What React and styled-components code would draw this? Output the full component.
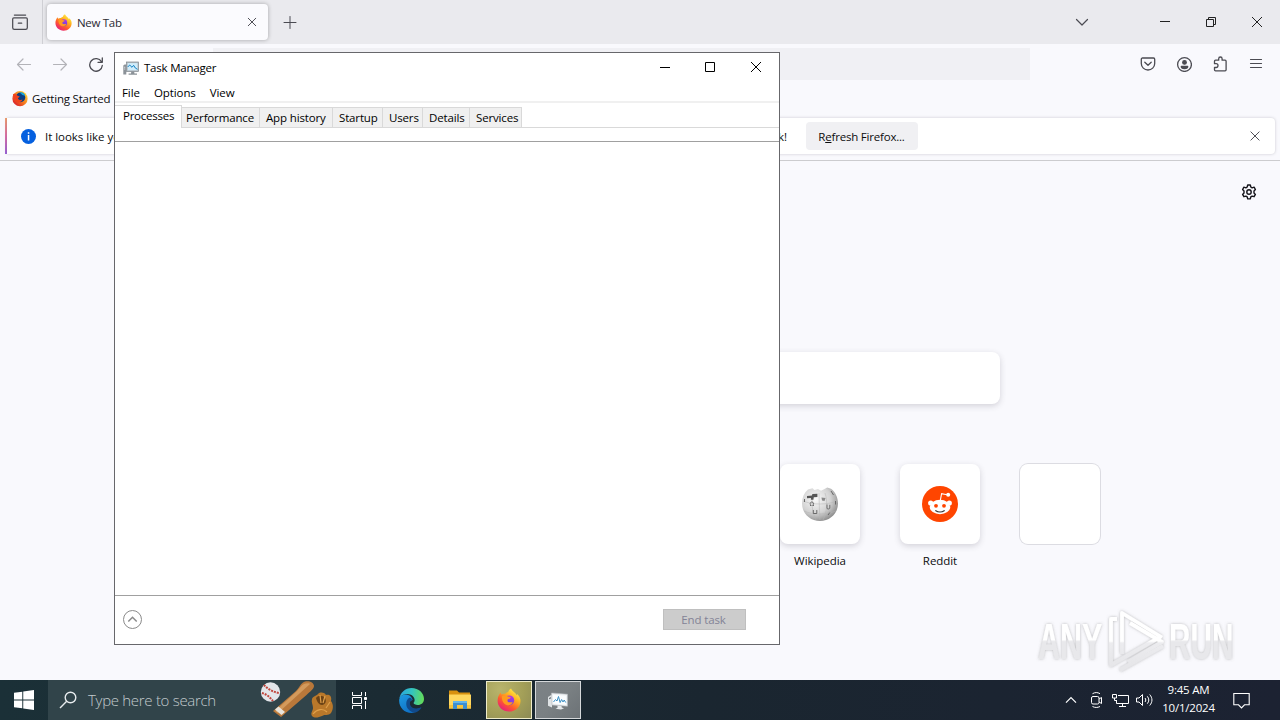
import React from 'react';
import styled, { createGlobalStyle, css } from 'styled-components';

const GlobalStyle = createGlobalStyle`
  * { box-sizing: border-box; }
  body {
    margin: 0;
    overflow: hidden;
    font-family: 'Open Sans', 'Noto Sans', sans-serif;
    font-size: 11.5px;
    letter-spacing: -0.2px;
    color: #0c0c0d;
  }
  svg { display: block; flex: none; }
`;

/* ---------- icons ---------- */

const LineIcon = ({ size = 16, width = 1.2, children }) => (
    <svg width={size} height={size} viewBox="0 0 16 16" fill="none" stroke="currentColor"
        strokeWidth={width} strokeLinecap="round" strokeLinejoin="round">
        {children}
    </svg>
);

const FirefoxLogo = ({ size, id }) => (
    <svg width={size} height={size} viewBox="0 0 24 24">
        <defs>
            <linearGradient id={`${id}-body`} x1="0.85" y1="0.05" x2="0.2" y2="1">
                <stop offset="0" stopColor="#fff44f" />
                <stop offset="0.35" stopColor="#ffb01f" />
                <stop offset="0.65" stopColor="#ff5a2d" />
                <stop offset="1" stopColor="#e31587" />
            </linearGradient>
            <linearGradient id={`${id}-core`} x1="0.6" y1="0" x2="0.3" y2="1">
                <stop offset="0" stopColor="#b833e1" />
                <stop offset="1" stopColor="#5b4bd8" />
            </linearGradient>
        </defs>
        <path fill={`url(#${id}-body)`} d="M14 0.5c1 2.4 3 3.5 4.3 4.8.8.8 1 1.5 1.2 2 .4-.3.5-.8.5-1.200C22.400 8 23.500 10.400 23.500 13c0 6-5 10.600-11.400 10.600S.6 18.800.6 12.800c0-3.600 1.400-6.300 3.200-8.200.1.900.3 1.400.7 2C5.700 5.800 7 5.600 8.200 5.800c1.100-1.200 2-1.700 2.900-1.900C11.500 2.500 12.500 1.300 14 .5z" />
        <circle cx="12.300" cy="12.300" r="4.900" fill={`url(#${id}-core)`} />
        <path fill="#ff9a1f" d="M5 8.300c1.800-1.500 4.300-1.400 5.800.2 1.300.2 2.300.5 3 .9-.5 1.200-2 1.300-2.800 1.900-1 .8-.6 2.500.7 2.900 1.500.5 2.900-.4 4.100.1-1 2.300-3.200 3.400-5.500 2.900C6.800 16.400 4.500 12.500 5 8.300z" />
    </svg>
);

const OldFirefoxLogo = () => (
    <svg width="16" height="16" viewBox="0 0 16 16">
        <defs>
            <linearGradient id="old-fox" x1="0.9" y1="0.1" x2="0.1" y2="0.9">
                <stop offset="0" stopColor="#ffd83a" />
                <stop offset="0.5" stopColor="#f57b1f" />
                <stop offset="1" stopColor="#d9182b" />
            </linearGradient>
        </defs>
        <circle cx="8" cy="7.700" r="7.600" fill="url(#old-fox)" />
        <circle cx="8.500" cy="6.400" r="4.800" fill="#0a3f82" />
        <path fill="#18a6d8" d="M8 1.300c2.600-.4 4.800 1.400 5.300 3.600-1.500-.9-2.800-.4-3.700-1.600-.6-.8-1.600-.9-1.600-2z" />
        <path fill="#f0421e" d="M1 3.200c1.600-.4 3.600.1 4.600 1.600l2.200.6-1.900 1.900c.4 2 3 2 4.600 1.300-1 3.100-4.500 3.700-6.900 1.400C2 8.400.8 5.900 1 3.200z" />
    </svg>
);

const TaskManagerIcon = ({ size = 16 }) => (
    <svg width={size} height={size} viewBox="0 0 16 16">
        <path fill="#8b9298" d="M0.300 5.500l1.300-.9h1.700v9.900H.300z" />
        <path fill="#d4d8da" d="M1 6.800h1.300v1H1zM1 8.600h1.300v1H1z" />
        <rect x="3.600" y="2" width="12" height="9.400" fill="#b5bdc3" stroke="#7d868c" strokeWidth=".7" />
        <rect x="4.700" y="3.100" width="9.800" height="7.200" fill="#cfecfa" />
        <path d="M4.700 7l2-2L9 7.300l1.600-2 1.800 2.800 2.100 1.200" fill="none" stroke="#1583c4" strokeWidth="1" />
        <path fill="#8b9298" d="M8.300 11.400h2.800l.4 2H14v1.300H5.600v-1.300H8z" />
    </svg>
);

const TaskbarMonitorIcon = () => (
    <svg width="22" height="20" viewBox="0 0 22 20">
        <path fill="#dfe3e5" d="M1 7l4-2.500v13L1 15.800z" />
        <path fill="#73797d" d="M2 8l2-1v1.500l-2 .8z" />
        <path fill="#eef1f3" stroke="#b4b9bd" strokeWidth=".6" d="M4.500 3L20.500 4.200v12L5 15z" />
        <path fill="#fafdff" d="M6 4.700l13 1v9L6.200 13.600z" />
        <path d="M6.500 12l2-2.500L10 11l1.500-4.500 1.600 6 1.500-3L16 12l1.200-2 1.500 2.500" fill="none" stroke="#3b8fc4" strokeWidth="1" />
        <path fill="#e5e8ea" d="M10.500 15.600l4 .4.300 1.500 2.200.8-3 1.200-5.500-.8 2-1z" />
    </svg>
);

const WikipediaLogo = () => (
    <svg width="38" height="38" viewBox="0 0 38 38">
        <defs>
            <radialGradient id="globe" cx="0.38" cy="0.35" r="0.7">
                <stop offset="0" stopColor="#fafafa" />
                <stop offset="0.6" stopColor="#d2d2d2" />
                <stop offset="1" stopColor="#8a8a8a" />
            </radialGradient>
        </defs>
        <path fill="url(#globe)" d="M7 4.500l4.500-1.200 2 1.700 3.500-.9 3 1.600 3-1.500 3.200-1.700 3.800 1.200C34.500 7 37 12.500 37 18.500 37 28.500 29 36 19 36S1 28.500 1 18.500C1 12.500 3 8 7 4.500z" />
        <path fill="none" stroke="#b4b4b4" strokeWidth=".5" d="M12 9c-2 8-1 18 3 26M24 8c3 9 2 19-2 27M2 16c10 4 24 4 34 0M3 26c9 4 23 4 32 0M18 8c0 9 .5 18 1 27" />
        <path fill="#555" d="M6 11l5-.4.4-1.600 5-.2v3.200l-3.600.3-.4 2.500h-2.500V13l-3.900.3z" />
        <path fill="#8a8a8a" d="M20.500 12.500l4 .5-1 3-2.500-.6z" />
        <path fill="none" stroke="#606060" strokeWidth=".9" d="M9 20.500h1.200c-1.800-1.500-1-3.500.7-3.500s2.300 2 .8 3.500H13M26 19.500v4c1 .8 2.500.5 2.800-.3v-3.400M12.300 25v3.500h3.500V25M27 30l1.800-2.500M30 6l2.500 4M3.500 14v3M34.500 16v3.500" />
    </svg>
);

const RedditLogo = () => (
    <svg width="36" height="36" viewBox="0 0 36 36">
        <circle cx="18" cy="18" r="18" fill="#ff4500" />
        <path d="M18.300 14.500l1.300-6.900 5.500 1.200" fill="none" stroke="#fff" strokeWidth="1.100" />
        <circle cx="26.200" cy="8.800" r="2" fill="#fff" />
        <circle cx="8.700" cy="17" r="2.600" fill="#fff" />
        <circle cx="27.300" cy="17" r="2.600" fill="#fff" />
        <ellipse cx="18" cy="21" rx="10.300" ry="7.200" fill="#fff" />
        <circle cx="14" cy="19.800" r="1.900" fill="#ff4500" />
        <circle cx="22" cy="19.800" r="1.900" fill="#ff4500" />
        <path d="M13.800 24.700c2.300 1.500 6.100 1.500 8.400 0" fill="none" stroke="#333" strokeWidth="1.200" strokeLinecap="round" />
    </svg>
);

const EdgeLogo = () => (
    <svg width="25" height="25" viewBox="0 0 24 24">
        <defs>
            <linearGradient id="edge-top" x1="0" y1="0.3" x2="1" y2="0.4">
                <stop offset="0" stopColor="#2aa6e0" />
                <stop offset="0.5" stopColor="#33c3c0" />
                <stop offset="1" stopColor="#63dc5a" />
            </linearGradient>
            <linearGradient id="edge-side" x1="0" y1="0" x2="0.6" y2="1">
                <stop offset="0" stopColor="#1e9be2" />
                <stop offset="1" stopColor="#0f6ec4" />
            </linearGradient>
        </defs>
        <path fill="url(#edge-side)" d="M.2 11C1 7 5 5.500 8 6.500c3 .8 5 3 5 5-2 .500-3.300 2-3 4 .5 3.500 5 6 10.500 3.800C18.500 22.200 15.500 24 12 24 5 24-.5 18 .2 11z" />
        <path fill="#114a8b" d="M9.500 9.500C6.500 11.500 6 17 9 20.500c2 2.300 5 3.400 7 3 2-.6 4-2.300 5.300-4.200.3-.5 0-.9-.6-.6-4.500 2-9.500.500-10.200-3.200-.3-1.700.4-3.500 2-4.500-.5-1.300-1.800-2-3-1.500z" />
        <path fill="url(#edge-top)" d="M.2 11C1 4.500 6 0 12 0c7 0 12 5 12 10.500 0 3.500-2.600 5.800-6 5.800-2.400 0-4-.8-4-1.800 0-.8 1-1 1-3 0-3-3-5.700-7-5.700-4 0-7 2-7.800 5.200z" />
    </svg>
);

const ExplorerLogo = () => (
    <svg width="24" height="22" viewBox="0 0 24 22">
        <path fill="#d8910f" d="M1 1.500h8l2 2h11v4H1z" />
        <path fill="#ffd75e" d="M1 5.500h22v14H1z" />
        <path fill="#f7c43c" d="M1 16h22v3.500H1z" />
        <path fill="#3d8fd1" d="M5 12h14v8h-4v-4H9v4H5z" />
        <path fill="#64b5ea" d="M5 12h14v2H5z" />
    </svg>
);

const BaseballArt = () => (
    <svg width="76" height="40" viewBox="0 0 76 40">
        <circle cx="10.500" cy="12" r="9.700" fill="#e3e6ea" />
        <path d="M4 5c3.500 4 9 7 15 8M2 13c4 1 8 4 11 8" fill="none" stroke="#c0453b" strokeWidth="2" strokeDasharray="2 1" />
        <path fill="#b9783a" d="M43 2.500c4-3 11-.5 11 3.500 0 3-4 5.500-7.500 9L21 37l-8-6L36 11c3-3 4-6.500 7-8.500z" />
        <path fill="#d39a5c" d="M44 4c3-1.500 6-.5 6 0L18 33l-3-2L37 11c3-3 4-5.500 7-7z" />
        <path fill="#e8e4dc" d="M18.500 26.500l6.500 5.500-3.500 3L15 29.500z" />
        <path fill="#b9782a" d="M52 19c1-3 4-3 6-5 2-2 6-2 8 1 4-1 6 2 5 6 3 4 2 9 0 12-3 3-6 1-9 3-3 1-7 3-10 0-2-3 1-5 1-8s-2-6-1-9z" />
        <path fill="#6b4215" d="M56 18c2-3 7-3 9 0 2 3 0 7-3 7s-5-3-6-7z" />
        <path fill="none" stroke="#e0a04a" strokeWidth="1.200" d="M53 34c4-5 10-6 14-2M60 15l1 8M65 16l-2 7M70 22l-4 6" />
    </svg>
);

const Watermark = () => (
    <svg width="212" height="76" viewBox="0 0 212 76">
        <defs>
            <linearGradient id="mark" gradientUnits="userSpaceOnUse" x1="0" y1="18" x2="0" y2="64">
                <stop offset="0" stopColor="#ffffff" />
                <stop offset="0.460" stopColor="#ffffff" />
                <stop offset="0.500" stopColor="#ececef" />
                <stop offset="1" stopColor="#e6e6e9" />
            </linearGradient>
            <linearGradient id="mark-text" gradientUnits="userSpaceOnUse" x1="0" y1="-36" x2="0" y2="0">
                <stop offset="0.460" stopColor="#ffffff" />
                <stop offset="0.520" stopColor="#e8e8eb" />
            </linearGradient>
            <filter id="mark-shadow" x="-10%" y="-10%" width="120%" height="120%">
                <feDropShadow dx="0" dy="0" stdDeviation="1.700" floodColor="#777" floodOpacity=".5" />
            </filter>
        </defs>
        <g filter="url(#mark-shadow)">
            <g fill="url(#mark-text)" fontFamily="'Liberation Sans', sans-serif" fontWeight="700" fontSize="50" letterSpacing="0">
                <text transform="translate(7 57) scale(0.610 1)">ANY</text>
                <text transform="translate(138 57) scale(0.595 1)">RUN</text>
            </g>
            <path fill="none" stroke="url(#mark)" strokeWidth="3.800" strokeLinejoin="round" d="M91 52V11l40 24.500M97 60l34-20-32-19" />
            <path fill="none" stroke="url(#mark)" strokeWidth="3.800" strokeLinejoin="round" d="M86 17h-6v46l49-28M89 68l43-24" />
        </g>
    </svg>
);

/* ---------- shell ---------- */

const Desktop = styled.div`
  position: relative;
  width: 1280px;
  height: 720px;
  display: flex;
  flex-direction: column;
  overflow: hidden;
`;

const Browser = styled.div`
  height: 680px;
  display: flex;
  flex-direction: column;
  background: #f9f9fd;
`;

const Slot = styled.div`
  width: ${p => p.$w}px;
  height: ${p => p.$h || 32}px;
  flex: none;
  display: flex;
  align-items: center;
  justify-content: center;
  color: ${p => p.$color || '#4b4b52'};
`;

const Spacer = styled.div`
  flex: 1;
`;

const TabStrip = styled.div`
  height: 44px;
  display: flex;
  align-items: center;
  background: #eaeaee;
`;

const ArchiveSlot = styled(Slot)`
  padding-right: 2px;
  border-right: 1px solid #cfcfd4;
`;

const BrowserTab = styled.div`
  width: 221px;
  height: 36px;
  margin-left: 4px;
  padding: 0 9px 0 8px;
  display: flex;
  align-items: center;
  gap: 5px;
  background: #fbfbfe;
  border-radius: 4px;
  box-shadow: 0 0 4px rgba(0, 0, 0, 0.3);
  color: #2b2a33;
`;

const TabLabel = styled.span`
  letter-spacing: -0.3px;
`;

const NavBar = styled.div`
  height: 40px;
  padding: 0 6px;
  display: flex;
  align-items: center;
`;

const UrlField = styled.div`
  width: 817px;
  height: 32px;
  margin-left: 99px;
  background: #f0f0f4;
`;

const Bookmarks = styled.div`
  height: 31px;
  padding: 0 12px 2px;
  display: flex;
  align-items: center;
  gap: 4px;
`;

const Notice = styled.div`
  height: 46px;
  padding: 3px 5px 6px;
  border-bottom: 1px solid #cccccf;
  display: flex;
`;

const NoticeAccent = styled.div`
  width: 2px;
  background: linear-gradient(#f0a070, #dc6fa8 50%, #9a62d8);
`;

const NoticeCard = styled.div`
  flex: 1;
  display: flex;
  align-items: center;
  padding-left: 14px;
  background: #fff;
  border-radius: 0 4px 4px 0;
  box-shadow: 0 0 3px rgba(58, 57, 68, 0.25);
`;

const NoticeText = styled.div`
  width: 742px;
  margin-left: 9px;
  display: flex;
  justify-content: space-between;
  letter-spacing: -0.03px;
  white-space: nowrap;
`;

const RefreshButton = styled.button`
  width: 112px;
  height: 28px;
  margin-left: 19px;
  padding: 0 1px 0 0;
  border: 0;
  border-radius: 4px;
  background: #f0f0f3;
  font: inherit;
  letter-spacing: -0.2px;
  color: #0c0c0d;
`;

const NewTabPage = styled.div`
  flex: 1;
  display: flex;
  flex-direction: column;
`;

const GearRow = styled.div`
  height: 191px;
  padding: 15px 15px 0;
  display: flex;
  justify-content: flex-end;
`;

const SearchBox = styled.div`
  width: 720px;
  height: 52px;
  margin: 0 auto 60px;
  border-radius: 8px;
  background: #fff;
  box-shadow: 0 2px 6px rgba(58, 57, 68, 0.2);
`;

const TopSites = styled.div`
  height: 108px;
  padding-right: 180px;
  display: flex;
  justify-content: flex-end;
  gap: 40px;
`;

const Site = styled.div`
  width: 80px;
  display: flex;
  flex-direction: column;
  align-items: center;
  gap: 8px;
  line-height: 17px;
  letter-spacing: -0.05px;
`;

const SiteTile = styled.div`
  width: 80px;
  height: 80px;
  display: flex;
  align-items: center;
  justify-content: center;
  background: #fff;
  border-radius: 8px;
  box-shadow: ${p => (p.$empty ? '0 0 0 1px #dcdce2' : '0 2px 6px rgba(58, 57, 68, 0.2)')};
`;

const WatermarkRow = styled.div`
  height: 76px;
  margin-top: 30px;
  padding-right: 37px;
  display: flex;
  justify-content: flex-end;
`;

/* ---------- task manager window ---------- */

const Window = styled.div`
  position: absolute;
  left: 114px;
  top: 52px;
  width: 666px;
  height: 593px;
  display: flex;
  flex-direction: column;
  background: #fff;
  border: 1px solid #67676b;
  color: #000;
`;

const TitleBar = styled.div`
  height: 30px;
  padding: 0 0 1px 8px;
  display: flex;
  align-items: center;
`;

const Title = styled.span`
  flex: 1;
  margin-left: 5px;
  letter-spacing: -0.22px;
`;

const WindowButton = styled(Slot)`
  height: 28px;
  padding-bottom: 1px;
`;

const MenuBar = styled.div`
  height: 20px;
  padding-left: 7px;
  display: flex;
  align-items: center;
  gap: 14px;
  border-bottom: 2px solid #f0f0f0;
  letter-spacing: -0.08px;
`;

const TabRow = styled.div`
  height: 25px;
  display: flex;
  align-items: flex-end;
  border-bottom: 1px solid #d9d9d9;
`;

const Tab = styled.div`
  width: ${p => p.$w}px;
  height: 20px;
  padding-left: ${p => p.$pad}px;
  border: 1px solid #d9d9d9;
  border-width: 1px 1px 0 0;
  background: #f0f0f0;
  line-height: 20px;
  letter-spacing: -0.15px;
  white-space: nowrap;
  ${p => p.$active && css`
    height: 23px;
    margin-bottom: -1px;
    background: #fff;
    line-height: 19px;
    letter-spacing: -0.25px;
  `}
`;

const ListHeader = styled.div`
  height: 14px;
  border-bottom: 1px solid #a0a0a0;
`;

const Footer = styled.div`
  height: 49px;
  padding: 0 33px 1px 8px;
  display: flex;
  align-items: center;
  justify-content: space-between;
  border-top: 1px solid #a0a0a0;
`;

const EndTask = styled.button`
  width: 83px;
  height: 21px;
  padding: 0 2px 0 0;
  border: 1px solid #bfbfbf;
  background: #cccccc;
  color: #838396;
  font: inherit;
  line-height: 18px;
  letter-spacing: -0.15px;
`;

/* ---------- taskbar ---------- */

const Taskbar = styled.div`
  height: 40px;
  display: flex;
  align-items: center;
  background: linear-gradient(90deg, #1b3037 0, #1b2b33 30%, #1a2630 55%, #1c2232 100%);
  color: #fff;
`;

const TaskSearch = styled.div`
  width: 288px;
  height: 40px;
  padding-left: 11px;
  display: flex;
  align-items: center;
  background: #31444a;
  color: #c3cbcd;
  font-size: 15px;
  letter-spacing: -0.3px;
`;

const SearchHint = styled.span`
  width: 173px;
  margin-left: 11px;
  font-weight: 300;
  white-space: nowrap;
`;

const AppTile = styled.div`
  width: 46px;
  height: 38px;
  margin-right: 3px;
  display: flex;
  align-items: center;
  justify-content: center;
  border: 1px solid ${p => p.$edge};
  background: ${p => p.$fill};
`;

const Clock = styled.div`
  width: 64px;
  padding: 0 3px 2px 0;
  text-align: center;
  line-height: 18px;
  letter-spacing: -0.2px;
`;

const TABS = [
    { label: 'Processes', w: 67, pad: 8, active: true },
    { label: 'Performance', w: 78, pad: 4 },
    { label: 'App history', w: 73, pad: 6 },
    { label: 'Startup', w: 50, pad: 6 },
    { label: 'Users', w: 40, pad: 6 },
    { label: 'Details', w: 47, pad: 6 },
    { label: 'Services', w: 52, pad: 6 },
];

const BrowserWindow = () => (
    <Browser>
        <TabStrip>
            <ArchiveSlot $w={43} $h={44}>
                <LineIcon size={18} width={1.1}>
                    <path d="M3 1.800h10M2.500 4.300h11c.6 0 1 .4 1 1V13c0 .9-.6 1.500-1.500 1.500H3c-.9 0-1.500-.6-1.500-1.500V5.300c0-.6.4-1 1-1zM6.500 9h3" />
                </LineIcon>
            </ArchiveSlot>
            <BrowserTab>
                <FirefoxLogo size={17} id="tab-fox" />
                <TabLabel>New Tab</TabLabel>
                <Spacer />
                <Slot $w={14}><LineIcon size={12} width={1.3}><path d="M3 3l10 10M13 3L3 13" /></LineIcon></Slot>
            </BrowserTab>
            <Slot $w={43}><LineIcon width={1}><path d="M2 8.500h12M8 2.500v12" /></LineIcon></Slot>
            <Spacer />
            <Slot $w={36}><LineIcon><path d="M2.500 5.500L8 11l5.500-5.500" /></LineIcon></Slot>
            <Slot $w={42} />
            <Slot $w={46}>
                <svg width="10" height="10"><path d="M0 4.500h10" stroke="#222" /></svg>
            </Slot>
            <Slot $w={46}>
                <svg width="10" height="10" fill="none" stroke="#222"><path d="M.5 2.500h7v7h-7zM2.500 2.500v-2h7v7h-2" /></svg>
            </Slot>
            <Slot $w={46}>
                <svg width="10" height="10" fill="none" stroke="#222"><path d="M0 0l10 10M10 0L0 10" /></svg>
            </Slot>
        </TabStrip>
        <NavBar>
            <Slot $w={36} $color="#b3b3b8"><LineIcon><path d="M14.500 8.500h-13M7 3L1.500 8.500 7 14" /></LineIcon></Slot>
            <Slot $w={36} $color="#b3b3b8"><LineIcon><path d="M1.500 8.500h13M9 3l5.500 5.500L9 14" /></LineIcon></Slot>
            <Slot $w={36}><LineIcon width={1.3}><path d="M13.500 5.800A6.300 6.300 0 1 0 14.300 9.500M14.300 2v4.300H10" /></LineIcon></Slot>
            <UrlField />
            <Spacer />
            <Slot $w={36}>
                <LineIcon width={1.3}><path d="M2.500 2h11c.7 0 1.200.5 1.200 1.200v4.300a6.700 6.500 0 0 1-13.400 0V3.200C1.300 2.500 1.800 2 2.500 2zM4.800 6.200L8 9.300l3.200-3.100" /></LineIcon>
            </Slot>
            <Slot $w={36}>
                <LineIcon width={1.3}>
                    <circle cx="8.500" cy="8.500" r="6.900" />
                    <circle cx="8.500" cy="6.400" r="1.800" fill="currentColor" />
                    <path fill="currentColor" d="M5.300 10.500h6.400c0 1.500-1.300 2-3.200 2s-3.200-.5-3.200-2z" />
                </LineIcon>
            </Slot>
            <Slot $w={36}>
                <LineIcon width={1.3}><path d="M2.500 7V5.200c0-.6.400-1 1-1h3.200V2.700a1.700 1.700 0 0 1 3.400 0v1.500h3c.6 0 1 .4 1 1v8.600c0 .6-.4 1-1 1H3.500c-.6 0-1-.4-1-1v-2.300h1.600a1.900 1.900 0 0 0 0-3.800H2.500z" /></LineIcon>
            </Slot>
            <Slot $w={36}><LineIcon><path d="M2.500 3.500h11M2.500 7.500h11M2.500 11.500h11" /></LineIcon></Slot>
        </NavBar>
        <Bookmarks>
            <OldFirefoxLogo />
            <span>Getting Started</span>
        </Bookmarks>
        <Notice>
            <NoticeAccent />
            <NoticeCard>
                <svg width="15" height="15" viewBox="0 0 15 15">
                    <circle cx="7.500" cy="7.500" r="7.500" fill="#0560df" />
                    <path fill="#fff" d="M6.800 3.200h1.500v1.500H6.800zM6.800 6h1.500v5.600H6.800z" />
                </svg>
                <NoticeText>
                    <span>It looks like you</span>
                    <span>welcome back!</span>
                </NoticeText>
                <RefreshButton>R<u>e</u>fresh Firefox...</RefreshButton>
                <Spacer />
                <Slot $w={41}><LineIcon size={12} width={1.3}><path d="M2.500 2.500l11 11M13.500 2.500l-11 11" /></LineIcon></Slot>
            </NoticeCard>
        </Notice>
        <NewTabPage>
            <GearRow>
                <Slot $w={32} $color="#15141a">
                    <LineIcon width={1.4}>
                        <circle cx="8" cy="8" r="2.200" />
                        <path d="M6.700 1h2.600l.5 2 1.300.8 2-.6 1.300 2.300-1.400 1.500v1.900l1.400 1.500-1.300 2.300-2-.6-1.300.8-.5 2H6.700l-.5-2-1.300-.8-2 .6-1.300-2.300L3 8.900V7L1.600 5.500l1.300-2.300 2 .6L6.200 3z" />
                    </LineIcon>
                </Slot>
            </GearRow>
            <SearchBox />
            <TopSites>
                <Site><SiteTile><WikipediaLogo /></SiteTile>Wikipedia</Site>
                <Site><SiteTile><RedditLogo /></SiteTile>Reddit</Site>
                <Site><SiteTile $empty /></Site>
            </TopSites>
            <WatermarkRow><Watermark /></WatermarkRow>
        </NewTabPage>
    </Browser>
);

const TaskManager = () => (
    <Window>
        <TitleBar>
            <TaskManagerIcon />
            <Title>Task Manager</Title>
            <WindowButton $w={44}><svg width="10" height="10"><path d="M0 5.500h10" stroke="#000" /></svg></WindowButton>
            <WindowButton $w={46}><svg width="10" height="10"><path d="M.5.5h9v9h-9z" fill="none" stroke="#000" /></svg></WindowButton>
            <WindowButton $w={46}><svg width="10" height="10"><path d="M0 0l10 10M10 0L0 10" stroke="#000" /></svg></WindowButton>
        </TitleBar>
        <MenuBar>
            <span>File</span>
            <span>Options</span>
            <span>View</span>
        </MenuBar>
        <TabRow>
            {TABS.map(tab => (
                <Tab key={tab.label} $w={tab.w} $pad={tab.pad} $active={tab.active}>{tab.label}</Tab>
            ))}
        </TabRow>
        <ListHeader />
        <Spacer />
        <Footer>
            <svg width="20" height="20" viewBox="0 0 20 20" fill="none" stroke="#8a8a8a">
                <circle cx="9.500" cy="9.500" r="9" />
                <path d="M5.300 11.500l4.200-4.200 4.200 4.200" strokeWidth="1.500" />
            </svg>
            <EndTask>End task</EndTask>
        </Footer>
    </Window>
);

const BottomBar = () => (
    <Taskbar>
        <Slot $w={48}>
            <svg width="20" height="20" viewBox="0 0 21 21" fill="#fff">
                <path d="M0 3l8.700-1.200V10H0zM9.700 1.700L21 0v10H9.700zM0 11h8.700v8.200L0 18zM9.700 11H21v10L9.700 19.300z" />
            </svg>
        </Slot>
        <TaskSearch>
            <svg width="18" height="18" viewBox="0 0 18 18" fill="none" stroke="#e8ecee" strokeWidth="1.400">
                <circle cx="11.500" cy="6.500" r="5.300" />
                <path d="M7.700 10.300L1 17" />
            </svg>
            <SearchHint>Type here to search</SearchHint>
            <BaseballArt />
        </TaskSearch>
        <Slot $w={47} $color="#fff">
            <svg width="17" height="17" viewBox="0 0 17 17" fill="none" stroke="#fff">
                <path d="M1.500 0v3.500h9V0M1.500 17v-3.500h9V17M1.500 5.500h9v6h-9zM14.500 0v4M14.500 9v8" />
                <path fill="#fff" d="M13.500 5.500h2v2h-2z" />
            </svg>
        </Slot>
        <Slot $w={56}><EdgeLogo /></Slot>
        <Slot $w={42}><ExplorerLogo /></Slot>
        <Slot $w={5} />
        <AppTile $edge="#efecc9" $fill="radial-gradient(circle at 30% 20%, #b8b46c, #a39f58 55%, #8c8a55)">
            <FirefoxLogo size={24} id="bar-fox" />
        </AppTile>
        <AppTile $edge="#d5d8da" $fill="linear-gradient(135deg, #7c8286, #7a8083 50%, #6c7276)">
            <TaskbarMonitorIcon />
        </AppTile>
        <Spacer />
        <Slot $w={24} $color="#fff">
            <svg width="12" height="8" fill="none" stroke="#fff" strokeWidth="1.200"><path d="M1 6.700l5-5 5 5" /></svg>
        </Slot>
        <Slot $w={27} $color="#fff">
            <svg width="14" height="18" viewBox="0 0 14 18" fill="none" stroke="#fff">
                <rect x="1.500" y="5.500" width="7.500" height="7.500" rx="1.500" />
                <path d="M9 8l2.500-1.500v6L9 11M2.500 2.700c2.500-1.500 5-1.500 7.500 0M2.500 15.500c2.500 1.300 5 1.300 7.500 0" />
            </svg>
        </Slot>
        <Slot $w={21} $color="#fff">
            <svg width="17" height="15" viewBox="0 0 17 15" fill="none" stroke="#fff">
                <path d="M6 2.500h10.500v8h-12V7M10.500 10.500v3M7 13.500h7" />
                <path d="M.5 1.500h4v3.500h-4zM2.500 5v2.500h2" />
            </svg>
        </Slot>
        <Slot $w={27} $color="#fff">
            <svg width="18" height="14" viewBox="0 0 18 14" fill="none" stroke="#fff">
                <path d="M.5 5h2.500l3.500-3.500v11L3 9H.5zM9 5c1 1.300 1 2.700 0 4M11.300 3.300c2 2.500 2 4.900 0 7.400M13.700 1.500c3 3.500 3 7.500 0 11" />
            </svg>
        </Slot>
        <Clock>9:45 AM<br />10/1/2024</Clock>
        <Slot $w={38} $color="#fff">
            <svg width="17" height="17" viewBox="0 0 17 17" fill="none" stroke="#fff" strokeWidth="1.100">
                <path d="M.8 1.500h15.400v11.300h-4.700L8.500 16l-3-3.200H.8z" />
            </svg>
        </Slot>
        <Slot $w={20} />
    </Taskbar>
);

const App = () => (
    <>
        <GlobalStyle />
        <Desktop>
            <BrowserWindow />
            <BottomBar />
            <TaskManager />
        </Desktop>
    </>
);

export default App;
